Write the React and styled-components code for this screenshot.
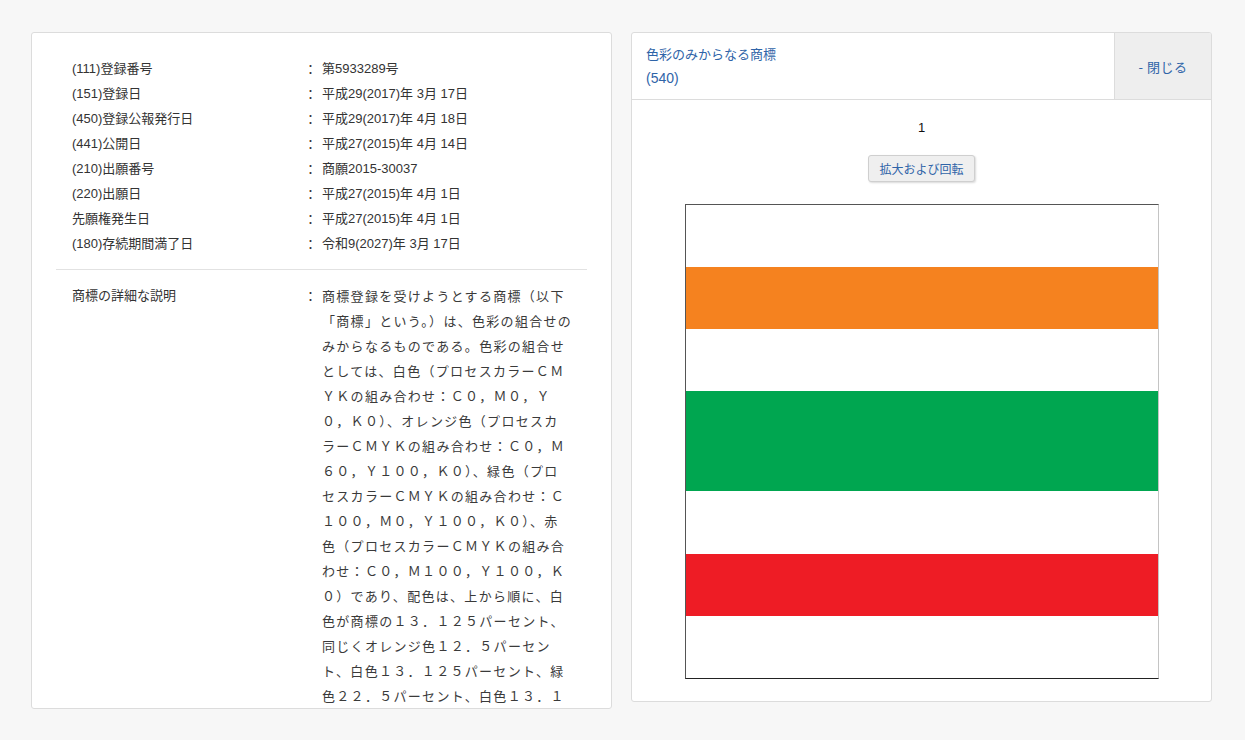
import styled, { createGlobalStyle } from "styled-components";

const GlobalStyle = createGlobalStyle`
  body {
    margin: 0;
    background: #f7f7f7;
    font-family: "Liberation Sans", "Noto Sans CJK JP", sans-serif;
    color: #333;
  }
`;

const Page = styled.div`
  display: flex;
  align-items: flex-start;
  gap: 19px;
  padding: 32px 33px 0 31px;
`;

const Card = styled.div`
  box-sizing: border-box;
  width: 582px;
  height: ${(p) => p.$h}px;
  background: #fff;
  border: 1px solid #dcdcdc;
  border-radius: 3px;
  overflow: hidden;
`;

const InfoList = styled.div`
  padding: 23px 24px 0;
`;

const Group = styled.div`
  padding: 0 16px 13px;
  border-bottom: ${(p) => (p.$last ? "none" : "1px solid #e2e2e2")};
  margin-bottom: 13px;
`;

const Row = styled.div`
  display: flex;
  font-size: 13px;
  line-height: 25px;
`;

const Label = styled.div`
  width: 232px;
  flex-shrink: 0;
`;

const Colon = styled.div`
  width: 18px;
  flex-shrink: 0;
  font-family: "Noto Sans CJK JP", sans-serif;
`;

const Value = styled.div`
  flex: 1;
`;

const Desc = styled.div`
  font-family: "Noto Sans CJK JP", sans-serif;
  font-size: 13px;
  letter-spacing: 1.3px;
  color: #3a3a3a;
`;

const DescLine = styled.div`
  white-space: nowrap;
  line-height: 25px;
`;

const Header = styled.div`
  display: flex;
  height: 66px;
  border-bottom: 1px solid #dcdcdc;
`;

const TitleBlock = styled.div`
  flex: 1;
  padding: 9px 14px 0;
  color: #2f64a8;
`;

const Title = styled.div`
  font-family: "Noto Sans CJK JP", sans-serif;
  font-size: 13px;
  line-height: 24px;
`;

const Code = styled.div`
  font-size: 14px;
  line-height: 24px;
`;

const Close = styled.div`
  width: 96px;
  display: flex;
  align-items: center;
  justify-content: center;
  background: #eeeeee;
  border-left: 1px solid #dcdcdc;
  color: #2f64a8;
  font-family: "Noto Sans CJK JP", sans-serif;
  font-size: 13px;
  letter-spacing: 0.5px;
`;

const Body = styled.div`
  display: flex;
  flex-direction: column;
  align-items: center;
  padding-top: 18px;
`;

const PageNo = styled.div`
  font-size: 13px;
  line-height: 20px;
  color: #111;
`;

const ZoomBtn = styled.button`
  margin-top: 17px;
  height: 27px;
  padding: 0 10px;
  background: #efefef;
  border: 1px solid #cfcfcf;
  border-radius: 3px;
  box-shadow: 1px 1px 2px rgba(0, 0, 0, 0.15);
  color: #2f64a8;
  font-family: "Noto Sans CJK JP", sans-serif;
  font-size: 12px;
`;

const Mark = styled.div`
  margin-top: 22px;
  box-sizing: border-box;
  width: 474px;
  height: 475px;
  display: flex;
  flex-direction: column;
  border: 1px solid #555;
  border-right-color: #c4c4c4;
  border-bottom-color: #222;
`;

const Stripe = styled.div`
  flex: ${(p) => p.$size} 0 0;
  background: ${(p) => p.$color};
`;

const rows = [
  ["(111)登録番号", "第5933289号"],
  ["(151)登録日", "平成29(2017)年 3月 17日"],
  ["(450)登録公報発行日", "平成29(2017)年 4月 18日"],
  ["(441)公開日", "平成27(2015)年 4月 14日"],
  ["(210)出願番号", "商願2015-30037"],
  ["(220)出願日", "平成27(2015)年 4月 1日"],
  ["先願権発生日", "平成27(2015)年 4月 1日"],
  ["(180)存続期間満了日", "令和9(2027)年 3月 17日"],
];

// only the part of the description that fits in the card
const description = [
  "商標登録を受けようとする商標（以下",
  "「商標」という。）は、色彩の組合せの",
  "みからなるものである。色彩の組合せ",
  "としては、白色（プロセスカラーＣＭ",
  "ＹＫの組み合わせ：Ｃ０，Ｍ０，Ｙ",
  "０，Ｋ０）、オレンジ色（プロセスカ",
  "ラーＣＭＹＫの組み合わせ：Ｃ０，Ｍ",
  "６０，Ｙ１００，Ｋ０）、緑色（プロ",
  "セスカラーＣＭＹＫの組み合わせ：Ｃ",
  "１００，Ｍ０，Ｙ１００，Ｋ０）、赤",
  "色（プロセスカラーＣＭＹＫの組み合",
  "わせ：Ｃ０，Ｍ１００，Ｙ１００，Ｋ",
  "０）であり、配色は、上から順に、白",
  "色が商標の１３．１２５パーセント、",
  "同じくオレンジ色１２．５パーセン",
  "ト、白色１３．１２５パーセント、緑",
  "色２２．５パーセント、白色１３．１",
];

const stripes = [
  ["#ffffff", 62],
  ["#f5821f", 62],
  ["#ffffff", 62],
  ["#00a650", 101],
  ["#ffffff", 63],
  ["#ee1c25", 62],
  ["#ffffff", 62],
];

const App = () => (
  <>
    <GlobalStyle />
    <Page>
      <Card $h={677}>
        <InfoList>
          <Group>
            {rows.map(([label, value]) => (
              <Row key={label}>
                <Label>{label}</Label>
                <Colon>：</Colon>
                <Value>{value}</Value>
              </Row>
            ))}
          </Group>
          <Group $last>
            <Row>
              <Label>商標の詳細な説明</Label>
              <Colon>：</Colon>
              <Desc>
                {description.map((line, i) => (
                  <DescLine key={i}>{line}</DescLine>
                ))}
              </Desc>
            </Row>
          </Group>
        </InfoList>
      </Card>
      <Card $h={670}>
        <Header>
          <TitleBlock>
            <Title>色彩のみからなる商標</Title>
            <Code>(540)</Code>
          </TitleBlock>
          <Close>- 閉じる</Close>
        </Header>
        <Body>
          <PageNo>1</PageNo>
          <ZoomBtn type="button">拡大および回転</ZoomBtn>
          <Mark>
            {stripes.map(([color, size], i) => (
              <Stripe key={i} $color={color} $size={size} />
            ))}
          </Mark>
        </Body>
      </Card>
    </Page>
  </>
);

export default App;
